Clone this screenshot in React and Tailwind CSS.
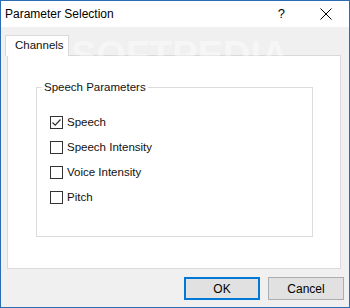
import { useState } from "react";

const font = { fontFamily: '"Liberation Sans", Arial, sans-serif' };

function CheckRow({ label, checked, onToggle }) {
  return (
    <div className="flex h-[25px] items-center cursor-default" onClick={onToggle}>
      <div className="flex h-[13px] w-[13px] items-center justify-center border border-[#333333] bg-white">
        {checked && (
          <svg width="11" height="11" viewBox="0 0 11 11">
            <path d="M1.5 5.5 L4.2 8.2 L9.5 2.5" fill="none" stroke="#333333" strokeWidth="1.2" />
          </svg>
        )}
      </div>
      <span className="ml-[4px] text-[11.5px] text-[#111]">{label}</span>
    </div>
  );
}

function App() {
  const [params, setParams] = useState({
    speech: true,
    speechIntensity: false,
    voiceIntensity: false,
    pitch: false,
  });

  const toggle = (key) => {
    setParams({ ...params, [key]: !params[key] });
  };

  return (
    <div className="relative flex h-[308px] w-[350px] flex-col overflow-hidden border border-[#2b6cb3] bg-[#f0f0f0]" style={font}>
      {/* title bar */}
      <div className="flex h-[26px] items-center bg-white">
        <span className="ml-[4px] text-[12px] text-black">Parameter Selection</span>
        <span className="ml-auto mr-[35px] text-[13px] text-black">?</span>
        <svg className="mr-[17px]" width="12" height="12" viewBox="0 0 12 12">
          <path d="M0.5 0.5 L11.5 11.5 M11.5 0.5 L0.5 11.5" stroke="#000" strokeWidth="1" />
        </svg>
      </div>

      {/* tabs */}
      <div className="flex flex-col pl-[6px] pt-[8px]">
        <div className="relative z-10 -mb-px ml-[-2px] flex h-[21px] w-[64px] items-center border border-b-0 border-[#d9d9d9] bg-white pl-[9px]">
          <span className="text-[11.5px] text-[#111]">Channels</span>
        </div>
        <div className="h-[214px] w-[334px] border border-[#d9d9d9] bg-white pl-[28px] pt-[31px]">
          <div className="relative h-[150px] w-[277px] border border-[#dcdcdc] pl-[13px] pt-[22px]">
            <span className="absolute left-[5px] top-[-8px] bg-white px-[2px] text-[11.5px] leading-[14px] text-[#111]">
              Speech Parameters
            </span>
            <CheckRow label="Speech" checked={params.speech} onToggle={() => toggle("speech")} />
            <CheckRow label="Speech Intensity" checked={params.speechIntensity} onToggle={() => toggle("speechIntensity")} />
            <CheckRow label="Voice Intensity" checked={params.voiceIntensity} onToggle={() => toggle("voiceIntensity")} />
            <CheckRow label="Pitch" checked={params.pitch} onToggle={() => toggle("pitch")} />
          </div>
        </div>
      </div>

      {/* buttons */}
      <div className="mt-[8px] flex justify-end gap-[8px] pr-[5px]">
        <button className="h-[23px] w-[76px] border-2 border-[#0078d7] bg-[#e1e1e1] text-[12px] text-black">
          OK
        </button>
        <button className="h-[23px] w-[76px] border border-[#adadad] bg-[#e1e1e1] text-[12px] text-black">
          Cancel
        </button>
      </div>

      {/* watermark */}
      <span className="pointer-events-none absolute left-[70px] top-[36px] text-[38px] font-bold leading-[36px] text-white opacity-40">
        SOFTPEDIA
      </span>
    </div>
  );
}

export default App;
